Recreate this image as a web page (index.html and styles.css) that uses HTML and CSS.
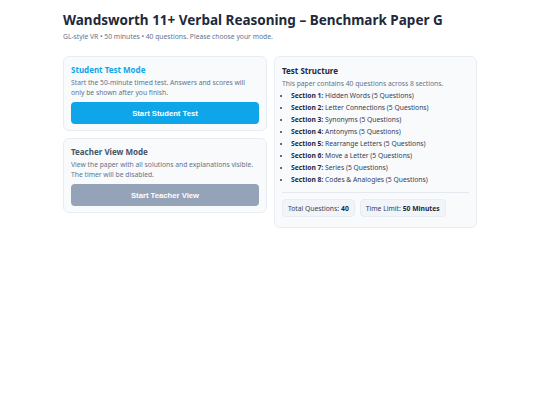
FILE: index.html
```html
<!DOCTYPE html>
<html lang="en">
<head>
<meta charset="utf-8">
<title>Wandsworth 11+ Verbal Reasoning – Benchmark Paper G</title>
<link rel="stylesheet" href="styles.css">
</head>
<body>
<main class="page">
  <h1 class="title">Wandsworth 11+ Verbal Reasoning – Benchmark Paper G</h1>
  <p class="subtitle">GL-style VR • 50 minutes • 40 questions. Please choose your mode.</p>
  <div class="grid">
    <div class="col">
      <section class="card mode">
        <h2 class="mode-title student">Student Test Mode</h2>
        <p class="desc">Start the 50-minute timed test. Answers and scores will only be shown after you finish.</p>
        <button class="btn btn-blue">Start Student Test</button>
      </section>
      <section class="card mode">
        <h2 class="mode-title teacher">Teacher View Mode</h2>
        <p class="desc">View the paper with all solutions and explanations visible. The timer will be disabled.</p>
        <button class="btn btn-grey">Start Teacher View</button>
      </section>
    </div>
    <section class="card structure">
      <h2 class="struct-title">Test Structure</h2>
      <p class="desc">This paper contains 40 questions across 8 sections.</p>
      <ul class="sections">
        <li><b>Section 1:</b> Hidden Words (5 Questions)</li>
        <li><b>Section 2:</b> Letter Connections (5 Questions)</li>
        <li><b>Section 3:</b> Synonyms (5 Questions)</li>
        <li><b>Section 4:</b> Antonyms (5 Questions)</li>
        <li><b>Section 5:</b> Rearrange Letters (5 Questions)</li>
        <li><b>Section 6:</b> Move a Letter (5 Questions)</li>
        <li><b>Section 7:</b> Series (5 Questions)</li>
        <li><b>Section 8:</b> Codes &amp; Analogies (5 Questions)</li>
      </ul>
      <div class="pills">
        <span class="pill">Total Questions: <b>40</b></span>
        <span class="pill">Time Limit: <b>50 Minutes</b></span>
      </div>
    </section>
  </div>
</main>
</body>
</html>
```

FILE: styles.css
```css
* { box-sizing: border-box; }
html, body { margin: 0; padding: 0; background: #ffffff; }
body {
  font-family: "Noto Sans", "Open Sans", sans-serif;
  color: #1f2937;
}
.page {
  width: 414px;
  margin: 0 auto;
  padding-top: 10px;
}
.title {
  margin: 0;
  font-size: 13.5px;
  line-height: 20px;
  font-weight: 700;
  color: #1e293b;
  white-space: nowrap;
}
.subtitle {
  margin: 2px 0 0;
  font-size: 6.75px;
  line-height: 10px;
  color: #64748b;
}
.grid {
  margin-top: 14px;
  display: grid;
  grid-template-columns: 204px 203px;
  column-gap: 7px;
  align-items: start;
}
.col {
  display: flex;
  flex-direction: column;
  gap: 7px;
}
.card {
  background: #f8fafc;
  border: 1px solid #e8edf3;
  border-radius: 6px;
}
.mode {
  padding: 7px 7px 6px;
}
.mode-title {
  margin: 0;
  font-size: 8px;
  line-height: 12px;
  font-weight: 700;
}
.mode-title.student { color: #0ea5e9; }
.mode-title.teacher { color: #475569; }
.desc {
  margin: 2px 0 0;
  font-size: 6.75px;
  line-height: 10px;
  color: #64748b;
}
.btn {
  display: block;
  width: 100%;
  height: 22px;
  margin-top: 4px;
  border: 0;
  border-radius: 4px;
  font-family: "Liberation Sans", Arial, sans-serif;
  font-size: 7.7px;
  font-weight: 700;
  color: #ffffff;
  padding: 0;
}
.btn-blue { background: #0ea5e9; }
.btn-grey { background: #94a3b8; }
.structure {
  padding: 8px 7px 10px;
}
.struct-title {
  margin: 0;
  font-size: 8px;
  line-height: 12px;
  font-weight: 700;
  color: #1e293b;
}
.structure .desc { margin-top: 2px; }
.sections {
  margin: 1px 0 0;
  padding: 0 0 6px 9px;
  border-bottom: 1px solid #e5e9ef;
  font-size: 6.75px;
  line-height: 12px;
  color: #334155;
}
.sections b { color: #1e293b; font-weight: 700; }
.pills {
  margin-top: 6px;
  display: flex;
  gap: 5px;
}
.pill {
  display: inline-flex;
  align-items: center;
  height: 18px;
  padding: 0 5px;
  background: #f1f5f9;
  border: 1px solid #e7ecf2;
  border-radius: 4px;
  font-size: 6.75px;
  color: #334155;
}
.pill b { margin-left: 2px; color: #1e293b; }
```
